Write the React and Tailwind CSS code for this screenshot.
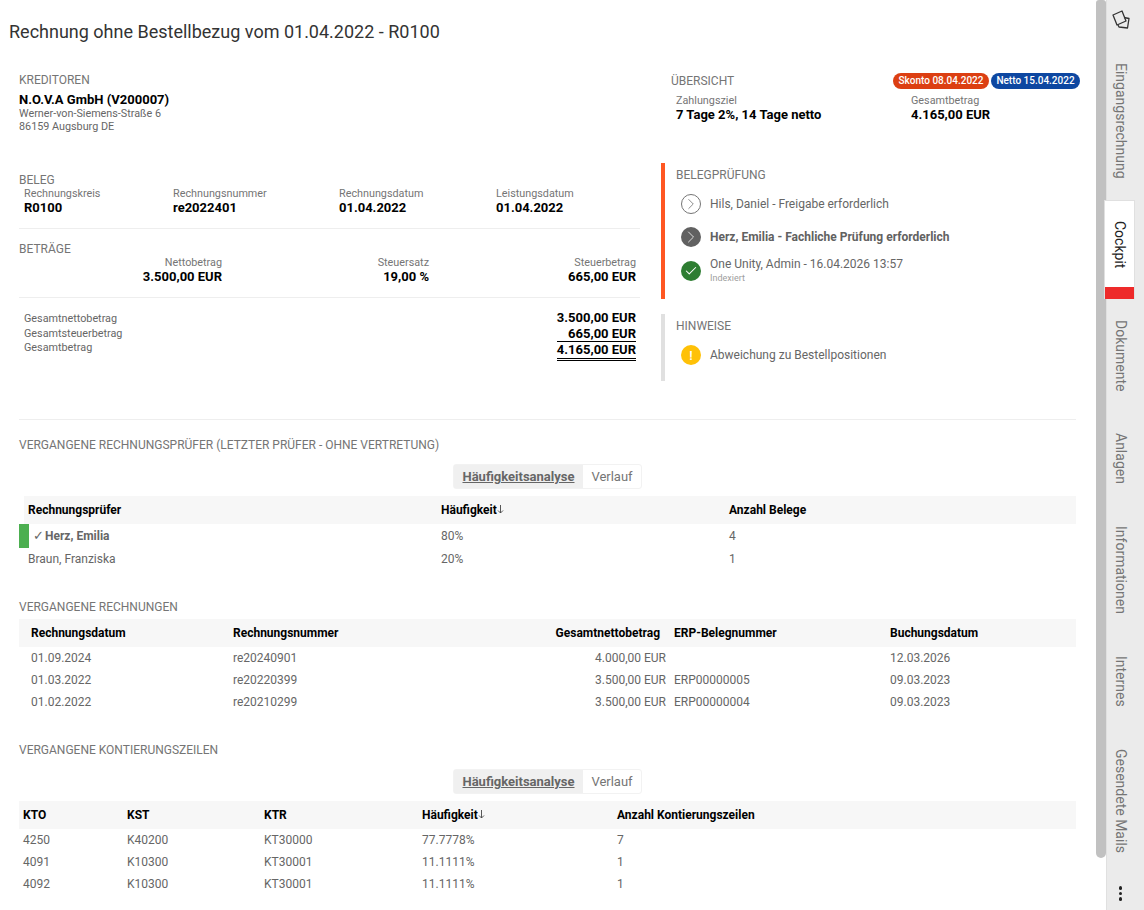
import { Check, ChevronRight } from 'lucide-react';

const label = 'text-[10.8px] leading-[14px] text-[#757575] mt-[1px]';
const value = 'text-[13px] leading-[16px] font-bold text-black -mt-[1px]';
const sectionTitle = 'text-[12px] leading-[14px] text-[#757575] uppercase';

function Field({ title, children, right, className = '' }) {
  return (
    <div className={`${right ? 'text-right' : ''} ${className}`}>
      <div className={label}>{title}</div>
      <div className={value}>{children}</div>
    </div>
  );
}

function Tabs() {
  return (
    <div className="flex justify-center">
      <div className="flex h-[25px] rounded-[3px] border border-[#f2f2f2] text-[13px] leading-[23px]">
        <div className="w-[129px] text-center bg-[#f0f0f0] font-bold text-[#666666] underline">Häufigkeitsanalyse</div>
        <div className="w-[58px] text-center text-[#757575]">Verlauf</div>
      </div>
    </div>
  );
}

function Row({ cols, cells, head }) {
  return (
    <div
      className={`grid items-center ${cols} ${head ? 'h-[28px] bg-[#f7f7f7] font-bold text-black text-[12px]' : 'h-[22px] text-[12px] text-[#666666]'}`}
    >
      {cells.map((c, i) => (
        <div key={i}>{c}</div>
      ))}
    </div>
  );
}

function SortLabel({ children }) {
  return (
    <span className="inline-flex items-center">
      {children}
      <svg width="7" height="10" viewBox="0 0 7 10" fill="none" stroke="#444444" strokeWidth="0.9" className="-mt-[3px]">
        <path d="M3.5 1v8M1 6.5 3.5 9 6 6.5" />
      </svg>
    </span>
  );
}

function Sidebar() {
  const rest = [
    ['Dokumente', 'h-[112px] pt-[2px]'],
    ['Anlagen', 'h-[95px]'],
    ['Informationen', 'h-[126px] pt-[2px]'],
    ['Internes', 'h-[98px]'],
    ['Gesendete Mails', 'h-[141px] pt-[2px]'],
  ];
  const vertical = '[writing-mode:vertical-rl] text-[14px] text-[#757575]';
  return (
    <div className="w-[38px] shrink-0 bg-[#ebebeb] flex flex-col border-l border-[#e0e0e0]">
      <div className="h-[40px] shrink-0 pt-[5px] -ml-[1px]">
        <svg width="30" height="30" viewBox="0 0 30 30" fill="none" stroke="#333333" strokeWidth="1.3" strokeLinejoin="round">
          <path d="M7 10 16 6 20 16 11 20Z" />
          <path d="M18 12.5 23 13.5 21.5 23 13 22 12 20" />
        </svg>
      </div>
      <div className={`h-[160px] pt-[2px] shrink-0 ${vertical} flex items-center justify-center w-[27px] leading-[27px]`}>Eingangsrechnung</div>
      <div className="w-[31px] h-[99px] shrink-0 -ml-[3px] bg-white border border-[#e0e0e0] border-b-0 flex flex-col relative">
        <div className="flex-1 pt-[2px] [writing-mode:vertical-rl] text-[14px] text-[#222222] flex items-center justify-center leading-[29px]">Cockpit</div>
        <div className="h-[12px] bg-[#ee2a2a]"></div>
      </div>
      {rest.map(([t, h]) => (
        <div key={t} className={`${h} shrink-0 ${vertical} flex items-center justify-center w-[27px] leading-[27px]`}>{t}</div>
      ))}
      <div className="w-[27px] mt-[15px] flex flex-col items-center gap-[2px]">
        <span className="w-[3.5px] h-[3.5px] rounded-full bg-[#222222]"></span>
        <span className="w-[3.5px] h-[3.5px] rounded-full bg-[#222222]"></span>
        <span className="w-[3.5px] h-[3.5px] rounded-full bg-[#222222]"></span>
      </div>
    </div>
  );
}

export default function App() {
  return (
    <div className="flex h-[910px] w-[1144px] overflow-hidden bg-white font-['Roboto',sans-serif]">
      <div className="w-[1096px] shrink-0 h-full">
        <h1 className="text-[18px] leading-[24px] text-[#333333] pl-[9px] pt-[20px]">Rechnung ohne Bestellbezug vom 01.04.2022 - R0100</h1>

        <div className="flex pl-[19px] pr-[16px] mt-[29px]">
          {/* linke Spalte */}
          <div className="w-[621px] shrink-0">
            <div className={sectionTitle}>Kreditoren</div>
            <div className="text-[13px] leading-[16px] font-bold text-black mt-[5px]">N.O.V.A GmbH (V200007)</div>
            <div className="text-[10.8px] leading-[13px] text-[#666666] -mt-[1px]">Werner-von-Siemens-Straße 6</div>
            <div className="text-[10.8px] leading-[13px] text-[#666666]">86159 Augsburg DE</div>

            <div className={`${sectionTitle} mt-[40px]`}>Beleg</div>
            <div className="flex pl-[5px] -mt-[1px] h-[43px] border-b border-[#eeeeee]">
              <Field title="Rechnungskreis" className="w-[149px]">R0100</Field>
              <Field title="Rechnungsnummer" className="w-[166px]">re2022401</Field>
              <Field title="Rechnungsdatum" className="w-[157px]">01.04.2022</Field>
              <Field title="Leistungsdatum">01.04.2022</Field>
            </div>

            <div className={`${sectionTitle} mt-[13px]`}>Beträge</div>
            <div className="grid grid-cols-[203px_207px_207px] h-[43px] -mt-[1px] border-b border-[#eeeeee]">
              <Field title="Nettobetrag" right>3.500,00 EUR</Field>
              <Field title="Steuersatz" right>19,00 %</Field>
              <Field title="Steuerbetrag" right>665,00 EUR</Field>
            </div>

            <div className="flex justify-between pl-[5px] pr-[4px] mt-[12px]">
              <div className="text-[10.8px] leading-[14.5px] text-[#666666] pt-[2px]">
                <div>Gesamtnettobetrag</div>
                <div>Gesamtsteuerbetrag</div>
                <div>Gesamtbetrag</div>
              </div>
              <div className="text-[13px] font-bold text-black text-right leading-[16px]">
                <div>3.500,00 EUR</div>
                <div className="border-b border-black leading-[15px]">665,00 EUR</div>
                <div className="border-b-[3px] border-double border-black inline-block">4.165,00 EUR</div>
              </div>
            </div>
          </div>

          {/* rechte Spalte */}
          <div className="flex-1 pl-[21px]">
            <div className="pl-[10px]">
              <div className="flex justify-between items-center h-[16px]">
                <div className={sectionTitle}>Übersicht</div>
                <div className="flex gap-[2px] whitespace-nowrap">
                  <span className="h-[16px] rounded-full bg-[#dc3f12] text-white font-medium text-[10px] leading-[16px] w-[96px] text-center">Skonto 08.04.2022</span>
                  <span className="h-[16px] rounded-full bg-[#0d47a1] text-white font-medium text-[10px] leading-[16px] w-[89px] text-center">Netto 15.04.2022</span>
                </div>
              </div>
              <div className="flex pl-[5px] mt-[4px]">
                <Field title="Zahlungsziel" className="w-[235px]">7 Tage 2%, 14 Tage netto</Field>
                <Field title="Gesamtbetrag">4.165,00 EUR</Field>
              </div>
            </div>

            <div className="mt-[40px] h-[136px] border-l-[4px] border-[#ff5722] pl-[11px] pt-[5px]">
              <div className={sectionTitle}>Belegprüfung</div>
              <div className="flex items-center gap-[9px] mt-[12px] h-[20px] pl-[5px]">
                <span className="w-[20px] h-[20px] rounded-full border border-[#757575] flex items-center justify-center">
                  <ChevronRight size={20} strokeWidth={1.1} className="text-[#757575]" />
                </span>
                <span className="text-[12px] text-[#666666]">Hils, Daniel - Freigabe erforderlich</span>
              </div>
              <div className="flex items-center gap-[9px] mt-[13px] h-[20px] pl-[5px]">
                <span className="w-[20px] h-[20px] rounded-full bg-[#616161] flex items-center justify-center">
                  <ChevronRight size={20} strokeWidth={1.2} className="text-[#e0e0e0]" />
                </span>
                <span className="text-[12px] font-bold text-[#616161]">Herz, Emilia - Fachliche Prüfung erforderlich</span>
              </div>
              <div className="flex items-center gap-[9px] mt-[10px] pl-[5px]">
                <span className="w-[20px] h-[20px] rounded-full bg-[#2e7d32] flex items-center justify-center">
                  <Check size={14} strokeWidth={1.8} className="text-white" />
                </span>
                <div>
                  <div className="text-[12px] leading-[14px] text-[#666666]">One Unity, Admin - 16.04.2026 13:57</div>
                  <div className="text-[9px] leading-[11px] text-[#9e9e9e] mt-[2px]">Indexiert</div>
                </div>
              </div>
            </div>

            <div className="mt-[15px] h-[67px] border-l-[4px] border-[#e0e0e0] pl-[11px] pt-[5px]">
              <div className={sectionTitle}>Hinweise</div>
              <div className="flex items-center gap-[9px] mt-[12px] h-[20px] pl-[5px]">
                <span className="w-[20px] h-[20px] rounded-full bg-[#ffc107] flex items-center justify-center text-white font-medium text-[13px] leading-none">!</span>
                <span className="text-[12px] text-[#666666]">Abweichung zu Bestellpositionen</span>
              </div>
            </div>
          </div>
        </div>

        <div className="ml-[19px] mr-[20px] mt-[38px] border-t border-[#eeeeee]"></div>

        <div className="pl-[19px] pr-[20px]">
          <div className={`${sectionTitle} mt-[18px]`}>Vergangene Rechnungsprüfer (letzter Prüfer - ohne Vertretung)</div>
          <div className="mt-[12px]"><Tabs /></div>
          <div className="mt-[7px] ml-[5px]">
            <Row head cols="grid-cols-[413px_288px_1fr] pl-[4px]" cells={['Rechnungsprüfer', <SortLabel>Häufigkeit</SortLabel>, 'Anzahl Belege']} />
            <div className="relative">
              <div className="absolute left-[-5px] top-0 w-[10px] h-[24px] bg-[#4caf50]"></div>
              <div className="grid grid-cols-[413px_288px_1fr] items-center h-[24px] pl-[4px] text-[12px] text-[#666666]">
                <div className="font-bold pl-[5px]"><span className="inline-block w-[12px] font-normal text-[13px] leading-[13px]">✓</span>Herz, Emilia</div>
                <div>80%</div>
                <div>4</div>
              </div>
            </div>
            <Row cols="grid-cols-[413px_288px_1fr] pl-[4px]" cells={['Braun, Franziska', '20%', '1']} />
          </div>

          <div className={`${sectionTitle} mt-[30px]`}>Vergangene Rechnungen</div>
          <div className="mt-[5px]">
            {[
              ['Rechnungsdatum', 'Rechnungsnummer', 'Gesamtnettobetrag', 'ERP-Belegnummer', 'Buchungsdatum'],
              ['01.09.2024', 're20240901', '4.000,00 EUR', '', '12.03.2026'],
              ['01.03.2022', 're20220399', '3.500,00 EUR', 'ERP00000005', '09.03.2023'],
              ['01.02.2022', 're20210299', '3.500,00 EUR', 'ERP00000004', '09.03.2023'],
            ].map((r, i) => (
              <div
                key={i}
                className={`grid grid-cols-[202px_253px_180px_224px_1fr] items-center pl-[12px] text-[12px] ${i === 0 ? 'h-[28px] bg-[#f7f7f7] font-bold text-black' : 'h-[22px] text-[#666666]'}`}
              >
                <div>{r[0]}</div>
                <div>{r[1]}</div>
                <div className={`text-right ${i === 0 ? 'pr-[6px]' : ''}`}>{r[2]}</div>
                <div className="pl-[8px]">{r[3]}</div>
                <div>{r[4]}</div>
              </div>
            ))}
          </div>

          <div className={`${sectionTitle} mt-[30px]`}>Vergangene Kontierungszeilen</div>
          <div className="mt-[12px]"><Tabs /></div>
          <div className="mt-[7px]">
            <Row head cols="grid-cols-[104px_137px_158px_195px_1fr] pl-[4px]" cells={['KTO', 'KST', 'KTR', <SortLabel>Häufigkeit</SortLabel>, 'Anzahl Kontierungszeilen']} />
            <Row cols="grid-cols-[104px_137px_158px_195px_1fr] pl-[4px]" cells={['4250', 'K40200', 'KT30000', '77.7778%', '7']} />
            <Row cols="grid-cols-[104px_137px_158px_195px_1fr] pl-[4px]" cells={['4091', 'K10300', 'KT30001', '11.1111%', '1']} />
            <Row cols="grid-cols-[104px_137px_158px_195px_1fr] pl-[4px]" cells={['4092', 'K10300', 'KT30001', '11.1111%', '1']} />
          </div>
        </div>
      </div>

      <div className="w-[10px] shrink-0">
        <div className="h-[858px] bg-[#c1c1c1] rounded-b-[5px] rounded-t-[3px]"></div>
      </div>
      <Sidebar />
    </div>
  );
}
